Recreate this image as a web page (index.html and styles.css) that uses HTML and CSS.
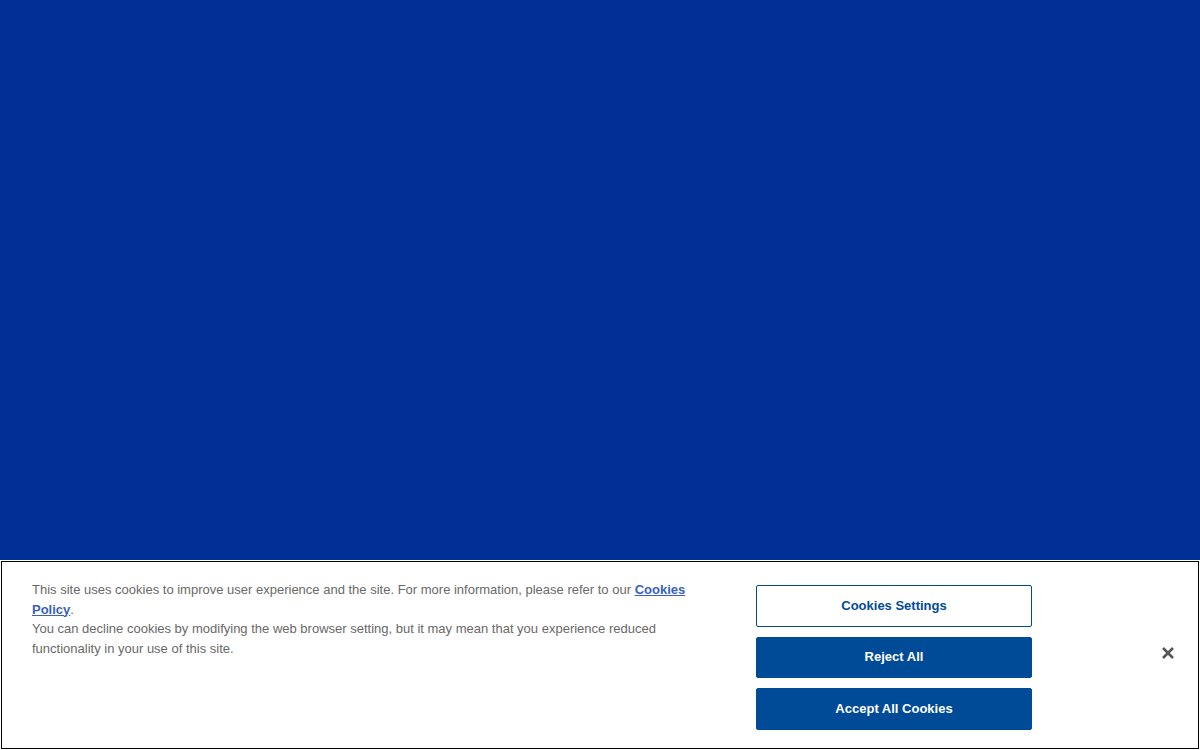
FILE: index.html
```html
<!DOCTYPE html>
<html lang="en">
<head>
<meta charset="utf-8">
<title>Cookies</title>
<link rel="stylesheet" href="styles.css">
</head>
<body>
<div class="page">
  <main class="hero"></main>
  <section class="banner">
    <div class="policy-text">
      <p class="para">This site uses cookies to improve user experience and the site. For more information, please refer to our <a class="policy-link" href="#">Cookies Policy</a>.</p>
      <p class="para">You can decline cookies by modifying the web browser setting, but it may mean that you experience reduced functionality in your use of this site.</p>
    </div>
    <div class="actions">
      <button class="btn btn-outline">Cookies Settings</button>
      <button class="btn btn-solid">Reject All</button>
      <button class="btn btn-solid">Accept All Cookies</button>
    </div>
    <button class="close" aria-label="Close">
      <svg width="14" height="14" viewBox="0 0 14 14"><path d="M2 2 L12 12 M12 2 L2 12" stroke="#555" stroke-width="2.5" stroke-linecap="butt"/></svg>
    </button>
  </section>
</div>
</body>
</html>
```

FILE: styles.css
```css
html, body {
  margin: 0;
  padding: 0;
}
body {
  font-family: "Liberation Sans", Arial, Helvetica, sans-serif;
}
.page {
  width: 1200px;
  height: 750px;
  display: flex;
  flex-direction: column;
}
.hero {
  flex: 1;
  background: #002f96;
}
.banner {
  height: 190px;
  box-sizing: border-box;
  background: #fff;
  outline: 1px solid #000;
  outline-offset: -2px;
  display: flex;
  align-items: flex-start;
  padding: 20px 0 0 32px;
}
.policy-text {
  width: 680px;
  font-size: 13px;
  line-height: 19.5px;
  color: #696969;
}
.para {
  margin: 0;
}
.policy-link {
  color: #3860be;
  font-weight: bold;
  text-decoration: underline;
}
.actions {
  margin-left: 44px;
  margin-top: 5px;
  width: 276px;
  display: flex;
  flex-direction: column;
  gap: 10px;
}
.btn {
  height: 41.5px;
  width: 100%;
  box-sizing: border-box;
  border-radius: 2px;
  font-family: "Liberation Sans", Arial, Helvetica, sans-serif;
  font-size: 13px;
  font-weight: bold;
  display: flex;
  align-items: center;
  justify-content: center;
  padding: 0 0 1px;
  cursor: pointer;
}
.btn-outline {
  background: #fff;
  border: 1px solid #004b98;
  color: #004b98;
}
.btn-solid {
  background: #004b98;
  border: 1px solid #004b98;
  color: #fff;
}
.close {
  margin-left: 129px;
  margin-top: 66px;
  width: 14px;
  height: 14px;
  padding: 0;
  border: 0;
  background: transparent;
  display: flex;
  cursor: pointer;
}
```
